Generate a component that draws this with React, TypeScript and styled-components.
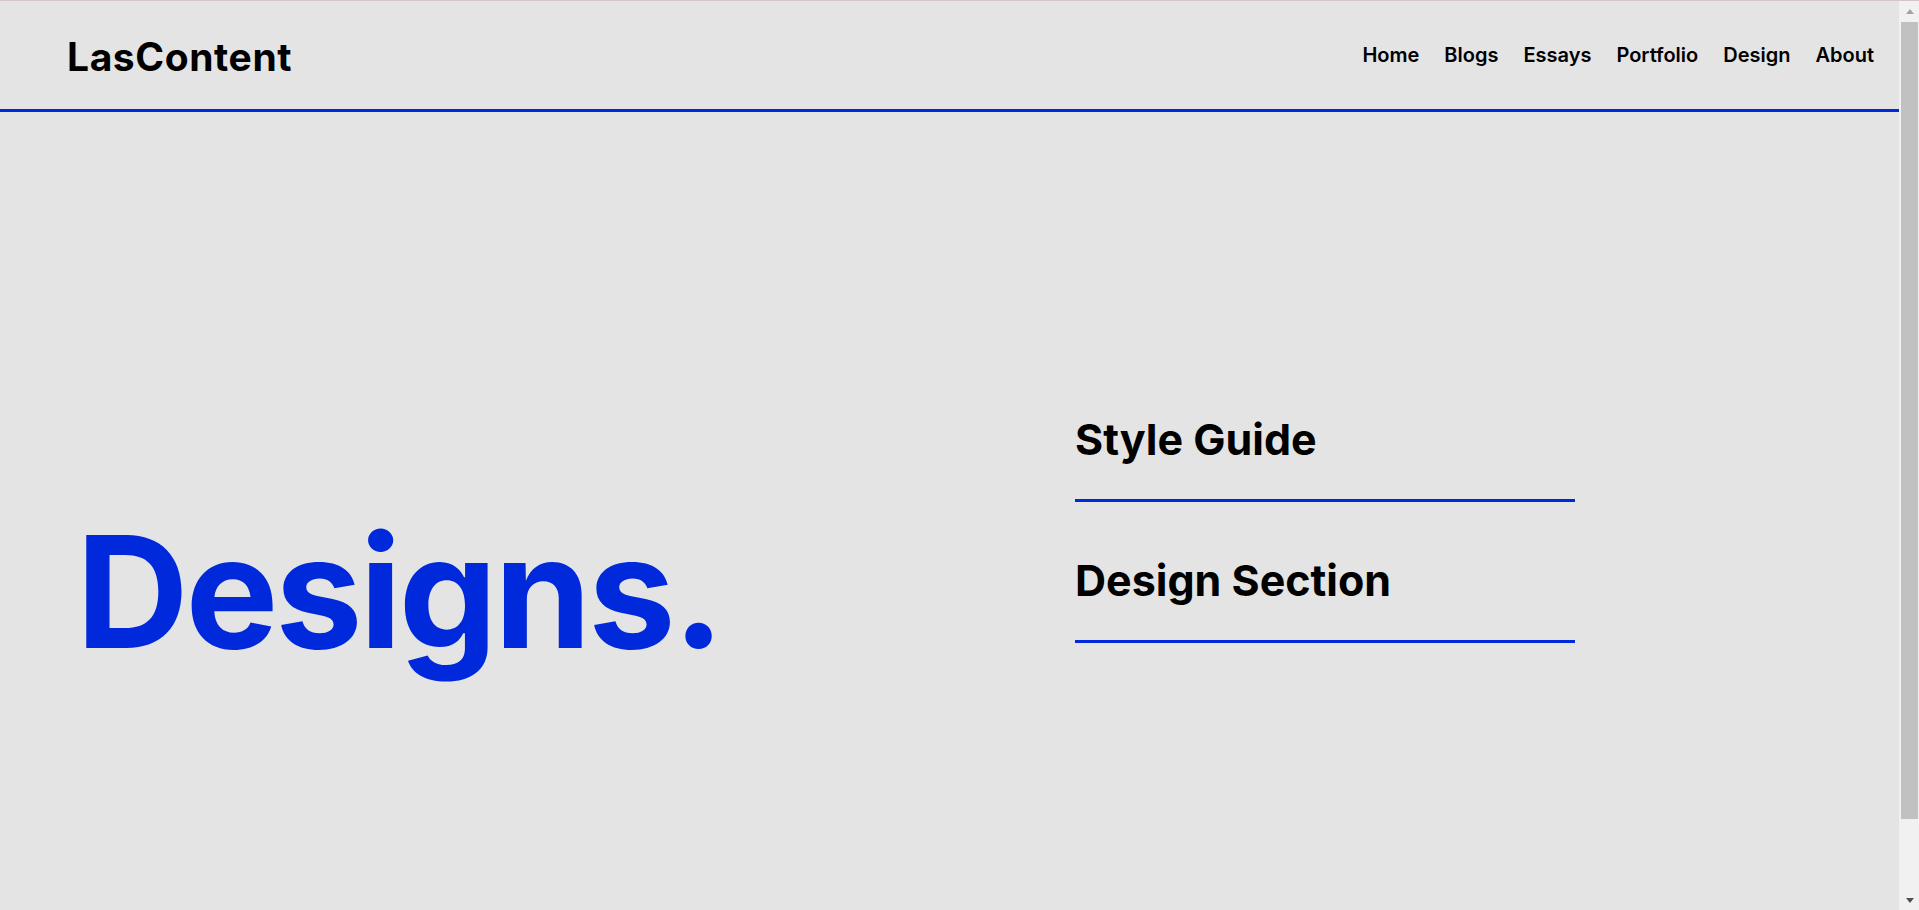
import React from "react";
import styled, { createGlobalStyle } from "styled-components";

const GlobalStyle = createGlobalStyle`
  html, body {
    margin: 0;
    padding: 0;
    background: #e4e4e4;
  }
  body {
    font-family: Inter, "Noto Sans", "Liberation Sans", sans-serif;
    color: #000;
    -webkit-font-smoothing: antialiased;
  }
  * { box-sizing: border-box; }
`;

const Page = styled.div`
  min-height: 995px;
  margin-right: 20px;
  border-top: 1px solid #d2c6c6;
  background: #e4e4e4;
`;

const Header = styled.header`
  height: 111px;
  display: flex;
  align-items: center;
  justify-content: space-between;
  padding: 3px 25px 0 67px;
  border-bottom: 3px solid #0029db;
`;

const Logo = styled.a`
  font-size: 39px;
  font-weight: 700;
  letter-spacing: 0.015em;
  color: #000;
  text-decoration: none;
`;

const Nav = styled.nav`
  display: flex;
  align-items: center;
  gap: 25px;
  margin-bottom: 3px;
`;

const NavLink = styled.a`
  font-size: 20px;
  font-weight: 600;
  color: #000;
  text-decoration: none;
`;

const Main = styled.main`
  display: grid;
  grid-template-columns: 1075px 500px;
  align-items: start;
  padding-top: 301px;
`;

const Hero = styled.h1`
  margin: 84px 0 0 76px;
  font-size: 156px;
  font-weight: 700;
  letter-spacing: -0.02em;
  line-height: normal;
  color: #0029db;
`;

const List = styled.ul`
  list-style: none;
  margin: 0;
  padding: 0;
`;

const Item = styled.li`
  padding-bottom: 34px;
  margin-bottom: 52px;
  border-bottom: 3px solid #0029db;
`;

const ItemLink = styled.a`
  font-size: 43px;
  font-weight: 700;
  line-height: normal;
  color: #000;
  text-decoration: none;
  display: block;
`;

/* window scrollbar, drawn over the right edge */
const ScrollTrack = styled.div`
  position: fixed;
  top: 0;
  right: 0;
  bottom: 0;
  width: 20px;
  background: #f1f1f1;
  border-top: 1px solid #d2c6c6;
  display: flex;
  flex-direction: column;
`;

const ScrollButton = styled.div<{ $down?: boolean }>`
  height: 20px;
  flex: none;
  display: flex;
  align-items: center;
  justify-content: center;
  padding-left: 1px;

  &::after {
    content: "";
    width: 0;
    height: 0;
    border-left: 4.5px solid transparent;
    border-right: 4.5px solid transparent;
    ${(p) =>
      p.$down
        ? "border-top: 5px solid #505050;"
        : "border-bottom: 5px solid #a3a3a3;"}
  }
`;

const ScrollThumb = styled.div`
  height: 797px;
  margin: 1px 1px 0 2px;
  background: #c1c1c1;
  flex: none;
`;

const ScrollSpacer = styled.div`
  flex: 1;
`;

const navItems = ["Home", "Blogs", "Essays", "Portfolio", "Design", "About"];
const sections = ["Style Guide", "Design Section"];

export default function App() {
  return (
    <>
      <GlobalStyle />
      <Page>
        <Header>
          <Logo href="#">LasContent</Logo>
          <Nav>
            {navItems.map((n) => (
              <NavLink key={n} href="#">
                {n}
              </NavLink>
            ))}
          </Nav>
        </Header>
        <Main>
          <Hero>Designs.</Hero>
          <List>
            {sections.map((s) => (
              <Item key={s}>
                <ItemLink href="#">{s}</ItemLink>
              </Item>
            ))}
          </List>
        </Main>
      </Page>
      <ScrollTrack aria-hidden="true">
        <ScrollButton />
        <ScrollThumb />
        <ScrollSpacer />
        <ScrollButton $down />
      </ScrollTrack>
    </>
  );
}
